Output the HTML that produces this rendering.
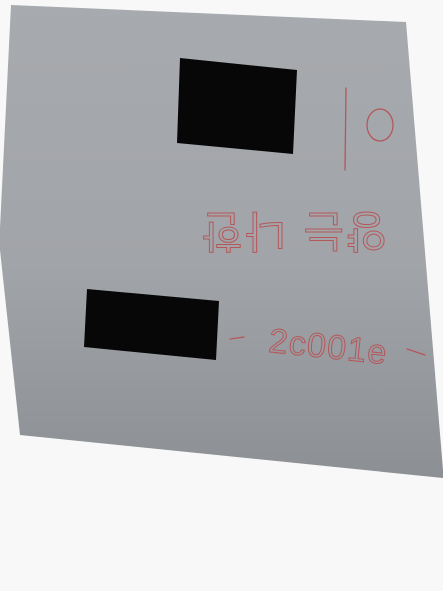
<!DOCTYPE html>
<html><head><meta charset="utf-8"><style>
html,body{margin:0;padding:0;background:#fafafa;width:443px;height:591px;overflow:hidden}
svg{display:block}
</style></head><body>
<svg width="443" height="591" viewBox="0 0 443 591" xmlns="http://www.w3.org/2000/svg">
<defs>
<linearGradient id="g" x1="0" y1="0" x2="0" y2="1">
<stop offset="0" stop-color="#a7aaae"/>
<stop offset="0.55" stop-color="#a1a4a8"/>
<stop offset="1" stop-color="#8c8f94"/>
</linearGradient>
</defs>
<rect width="443" height="591" fill="#f8f8f8"/>
<polygon points="11,5 406,22 443,470 443,478 20,435 0,250 0,228" fill="url(#g)"/>
<polygon points="180,58 297,70 293,154 177,143" fill="#070707"/>
<polygon points="87,289 219,301 216,360 84,347" fill="#070707"/>
<g fill="none" stroke="#b5575a" stroke-width="1.3" stroke-linecap="round">
<path d="M346,88 L345,170"/>
<ellipse cx="380" cy="125" rx="13" ry="16"/>
<path d="M230,339 L244,337"/>
<path d="M407,349 L425,355"/>
</g>
<g font-family="'Liberation Sans','Noto Sans CJK KR',sans-serif">
<text x="0" y="0" font-size="44" transform="translate(387,216) rotate(180)" textLength="185" style="fill:none;stroke:#b5575a;stroke-width:1">양는 나한</text>
<text x="268" y="352" font-size="34" textLength="118" transform="rotate(6 270 350)" style="fill:none;stroke:#b5575a;stroke-width:1">2c001e</text>
</g>
</svg>
</body></html>
